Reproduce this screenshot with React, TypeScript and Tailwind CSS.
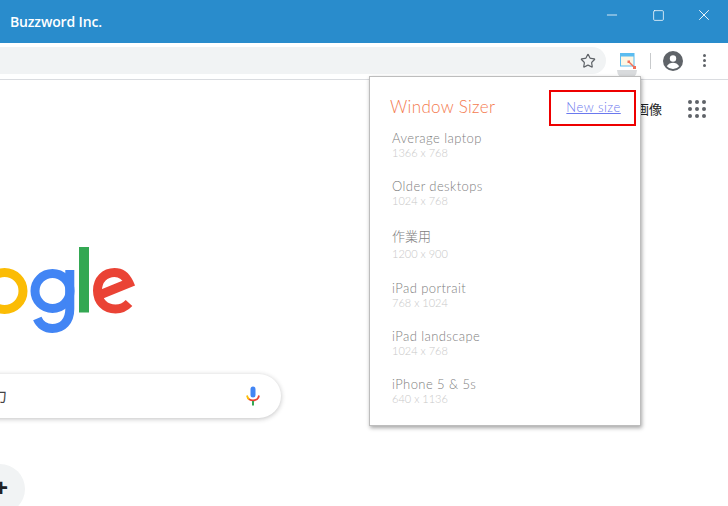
import { Star, Minus, Square, X } from 'lucide-react';

const sizes = [
  { name: 'Average laptop', dim: '1366 x 768' },
  { name: 'Older desktops', dim: '1024 x 768' },
  { name: '作業用', dim: '1200 x 900', cjk: true },
  { name: 'iPad portrait', dim: '768 x 1024' },
  { name: 'iPad landscape', dim: '1024 x 768' },
  { name: 'iPhone 5 & 5s', dim: '640 x 1136' },
];

function ExtensionIcon() {
  return (
    <svg width="16" height="16" viewBox="0 0 16 16" fill="none">
      <rect x="0.500" y="0.500" width="13.500" height="12.500" fill="#fdf6e3" stroke="#5bbcf0" strokeWidth="1" />
      <rect x="0.500" y="0.500" width="13.500" height="3" fill="#5bbcf0" />
      <path d="M8.500 8.500 L14 14" stroke="#f0705a" strokeWidth="1.400" />
      <rect x="7.500" y="7.500" width="2.500" height="2.500" fill="#f0705a" />
      <rect x="13" y="13" width="3" height="3" fill="#f0705a" />
    </svg>
  );
}

function Avatar() {
  return (
    <svg width="20" height="20" viewBox="0 0 20 20">
      <circle cx="10" cy="10" r="10" fill="#5f6368" />
      <circle cx="10" cy="7.500" r="3.200" fill="#fff" />
      <path d="M3.800 15.200c1.400-2.300 3.900-3.400 6.200-3.400s4.800 1.100 6.200 3.400A8 8 0 0 1 10 18a8 8 0 0 1-6.200-2.800z" fill="#fff" />
    </svg>
  );
}

function GoogleLogo() {
  return (
    <svg width="140" height="90" viewBox="0 0 140 90" fill="none">
      {/* o */}
      <circle cx="4.500" cy="44" r="18.500" stroke="#fbbc05" strokeWidth="9" />
      {/* g */}
      <circle cx="52.500" cy="44" r="17.500" stroke="#4285f4" strokeWidth="9" />
      <path d="M69.800 23V62c0 12-7 19.500-17.500 19.500-7 0-12.500-4-15-10" stroke="#4285f4" strokeWidth="9" />
      {/* l */}
      <rect x="79" y="0" width="10" height="65.500" fill="#34a853" />
      {/* e */}
      <path
        d="M129 56c-3.500 3.800-8 6-13.500 6-10.500 0-18-7.500-18-18.500S105 25.500 114.500 25.500c6.500 0 11.500 4 14.500 10.500L102 47"
        stroke="#ea4335"
        strokeWidth="9"
      />
    </svg>
  );
}

function MicIcon() {
  return (
    <svg width="14" height="20" viewBox="0 0 14 20" fill="none">
      <rect x="4.500" y="0.500" width="5" height="11" rx="2.500" fill="#4285f4" />
      <path d="M1 9.500c.3 2 1.200 3.300 2.500 4" stroke="#fbbc05" strokeWidth="1.800" />
      <path d="M3 13.300c2.500 1.400 5.500 1.400 8 0 1-.7 1.700-2 2-3.800" stroke="#ea4335" strokeWidth="1.800" />
      <rect x="6" y="15" width="2" height="4.500" fill="#34a853" />
    </svg>
  );
}

export default function App() {
  return (
    <div className="relative w-[728px] h-[506px] overflow-hidden bg-white flex flex-col font-['Lato','Liberation_Sans','Noto_Sans_CJK_JP',sans-serif]">
      {/* Title bar */}
      <div className="h-[43px] shrink-0 bg-[#298ccc] flex items-center pl-[10px] text-white">
        <span className="text-[14px] tracking-[-0.15px] font-['Open_Sans','Liberation_Sans',sans-serif] font-semibold">Buzzword Inc.</span>
        <div className="ml-auto flex items-center pr-px pb-[13px]">
          <div className="w-[46px] flex justify-center"><Minus size={16} strokeWidth={1.200} /></div>
          <div className="w-[46px] flex justify-center"><Square size={13} strokeWidth={1.400} /></div>
          <div className="w-[46px] flex justify-center"><X size={18} strokeWidth={1.200} /></div>
        </div>
      </div>

      {/* Toolbar */}
      <div className="h-[37px] shrink-0 border-b border-[#dadce0] flex pt-[4px]">
        <div className="w-[606px] h-[27px] bg-[#f1f3f4] rounded-r-full flex items-center justify-end pr-[10px] text-[#5f6368]">
          <Star size={16} strokeWidth={1.800} />
        </div>
        <div className="flex-1 h-[27px] flex items-center pl-[14px]">
          <ExtensionIcon />
          <div className="ml-[14px] w-px h-[16px] bg-[#c8cacc]" />
          <div className="ml-[12px]"><Avatar /></div>
          <div className="ml-[20px] flex flex-col gap-[2px]">
            <span className="w-[3px] h-[3px] rounded-full bg-[#5f6368]" />
            <span className="w-[3px] h-[3px] rounded-full bg-[#5f6368]" />
            <span className="w-[3px] h-[3px] rounded-full bg-[#5f6368]" />
          </div>
        </div>
      </div>

      {/* Page */}
      <div className="flex-1 flex flex-col">
        <div className="flex justify-end items-center pt-[19px] pr-[22px] gap-[26px]">
          <span className="text-[13px] text-[#222] font-['Noto_Sans_CJK_JP',sans-serif]">画像</span>
          <div className="grid grid-cols-3 gap-[3px]">
            {Array.from({ length: 9 }).map((_, i) => (
              <span key={i} className="w-[4px] h-[4px] rounded-full bg-[#5f6368]" />
            ))}
          </div>
        </div>
        <div className="mt-[128px]">
          <GoogleLogo />
        </div>
        <div className="mt-[37px] ml-[-40px] w-[321px] h-[44px] rounded-full bg-white shadow-[0_1px_5px_rgba(32,33,36,0.28)] flex items-center pl-[17px] pr-[21px] justify-between">
          <span className="text-[15px] text-[#444] font-['Noto_Sans_CJK_JP',sans-serif]">入力</span>
          <MicIcon />
        </div>
        <div className="mt-[46px] ml-[-25px] w-[50px] h-[50px] shrink-0 rounded-full bg-[#f1f3f4] flex items-start justify-center pt-[12px] pl-[2px] text-[#202124]">
          <span className="text-[24px] leading-[24px] font-bold font-['Liberation_Sans',sans-serif]">+</span>
        </div>
      </div>

      {/* Active extension bump */}
      <div className="absolute left-[617px] top-[70px] w-[20px] h-[10px] rounded-b-full bg-[#d9dbdd]" />

      {/* Popup */}
      <div className="absolute left-[369px] top-[76px] w-[272px] h-[350px] bg-white border border-[#bdbdbd] shadow-[1px_2px_4px_rgba(0,0,0,0.35)] pl-[20px] pt-[20px]">
        <div className="flex items-center h-[20px]">
          <span className="text-[17px] tracking-[0.33px] font-light text-[#f47b50]">Window Sizer</span>
          <a className="ml-[71px] pt-px text-[13px] tracking-[0.5px] font-light text-[#6a78ee] underline">New size</a>
        </div>
        <div className="mt-[13px] pl-[2px] flex flex-col">
          {sizes.map(s => (
            <div key={s.dim + s.name} className={s.cjk ? 'h-[54px]' : 'h-[48px]'}>
              <div className={s.cjk
                ? 'text-[13px] leading-[16px] text-[#808080] font-light pt-[2px] h-[21px]'
                : 'text-[13px] tracking-[0.42px] leading-[16px] text-[#808080] font-light'}>{s.name}</div>
              <div className="text-[11px] leading-[13px] text-[#c8c8c8] font-light">{s.dim}</div>
            </div>
          ))}
        </div>
      </div>

      {/* Highlight box */}
      <div className="absolute left-[549px] top-[90px] w-[87px] h-[36px] border-2 border-[#ee0000]" />
    </div>
  );
}
